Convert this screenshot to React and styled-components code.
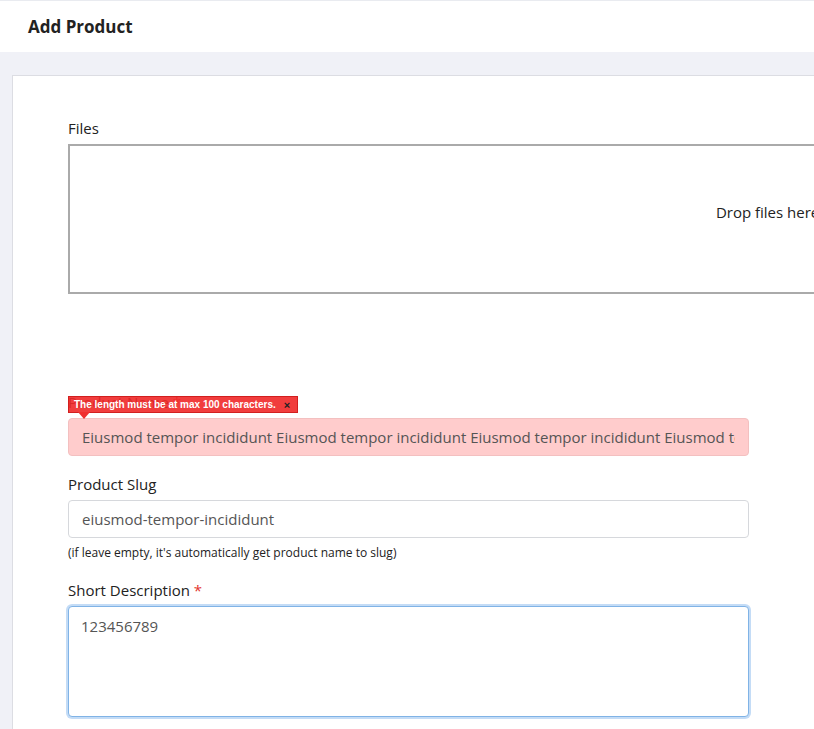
import React from "react";
import styled, { createGlobalStyle } from "styled-components";

const GlobalStyle = createGlobalStyle`
  html, body {
    margin: 0;
    padding: 0;
    background: #f0f1f7;
    overflow: hidden;
    font-family: "Open Sans", "Noto Sans", sans-serif;
    color: #212529;
  }
  * { box-sizing: border-box; }
`;

const Header = styled.header`
  height: 52px;
  background: #fff;
  border-top: 1px solid #e9ebf0;
  display: flex;
  align-items: center;
  padding: 0 28px;

  h1 {
    margin: 0;
    font-size: 17px;
    font-weight: 700;
    color: #222;
  }
`;

const Main = styled.main`
  padding: 23px 0 0 12px;
`;

const Card = styled.section`
  width: 1600px;
  min-height: 700px;
  background: #fff;
  border: 1px solid #dcdde3;
  border-right: none;
  padding: 42px 55px;
`;

const Group = styled.div`
  position: relative;
  width: ${(p) => (p.$wide ? "1470px" : "681px")};
  margin-bottom: ${(p) => p.$gap || "18px"};
`;

const Label = styled.label`
  display: block;
  font-size: 15px;
  line-height: 20px;
  margin-bottom: 6px;
  color: #222;

  span {
    color: #e3342f;
  }
`;

const DropZone = styled.div`
  height: 150px;
  border: 2px solid #aaa;
  display: flex;
  align-items: center;
  justify-content: center;
  font-size: 15px;
  color: #222;
  padding-bottom: 14px;
`;

const Input = styled.input`
  display: block;
  width: 100%;
  height: 38px;
  padding: 0 13px;
  font-family: inherit;
  font-size: 15px;
  color: #555;
  background: ${(p) => (p.$error ? "#ffcccc" : "#fff")};
  border: 1px solid ${(p) => (p.$error ? "#f3c0c0" : "#d6d8dc")};
  border-radius: 4px;
  outline: none;
`;

const TextArea = styled.textarea`
  display: block;
  width: 100%;
  height: 111px;
  padding: 9px 12px;
  font-family: inherit;
  font-size: 15px;
  color: #555;
  border: 1px solid #80b3e6;
  border-radius: 4px;
  box-shadow: 0 0 0 2px #c4dcf6;
  outline: none;
  resize: none;
`;

const Help = styled.small`
  display: block;
  margin-top: 6px;
  font-size: 12px;
  color: #222;
`;

const Tooltip = styled.div`
  position: absolute;
  left: 0;
  top: 4px;
  height: 17px;
  padding: 0 7px 0 5px;
  display: flex;
  align-items: center;
  gap: 8px;
  background: rgba(240, 40, 40, 0.9);
  border: 1px solid #d21f1f;
  color: #fff;
  font-family: "Liberation Sans", Arial, sans-serif;
  font-size: 10px;
  font-weight: 700;
  white-space: nowrap;

  b {
    color: #222;
    font-size: 11px;
  }

  &::after {
    content: "";
    position: absolute;
    left: 9px;
    bottom: -7px;
    border-left: 6px solid transparent;
    border-right: 6px solid transparent;
    border-top: 7px solid #f03030;
  }
`;

const productName =
  "Eiusmod tempor incididunt Eiusmod tempor incididunt Eiusmod tempor incididunt Eiusmod tempor incididunt";

export default function App() {
  return (
    <>
      <GlobalStyle />
      <Header>
        <h1>Add Product</h1>
      </Header>
      <Main>
        <Card>
          <Group $wide $gap="98px">
            <Label>Files</Label>
            <DropZone>Drop files here to upload</DropZone>
          </Group>
          <Group $gap="18px">
            <Label>
              Product Name <span>*</span>
            </Label>
            <Tooltip>
              The length must be at max 100 characters. <b>×</b>
            </Tooltip>
            <Input $error defaultValue={productName} />
          </Group>
          <Group $gap="19px">
            <Label>Product Slug</Label>
            <Input defaultValue="eiusmod-tempor-incididunt" />
            <Help>(if leave empty, it's automatically get product name to slug)</Help>
          </Group>
          <Group>
            <Label>
              Short Description <span>*</span>
            </Label>
            <TextArea defaultValue="123456789" />
          </Group>
        </Card>
      </Main>
    </>
  );
}
